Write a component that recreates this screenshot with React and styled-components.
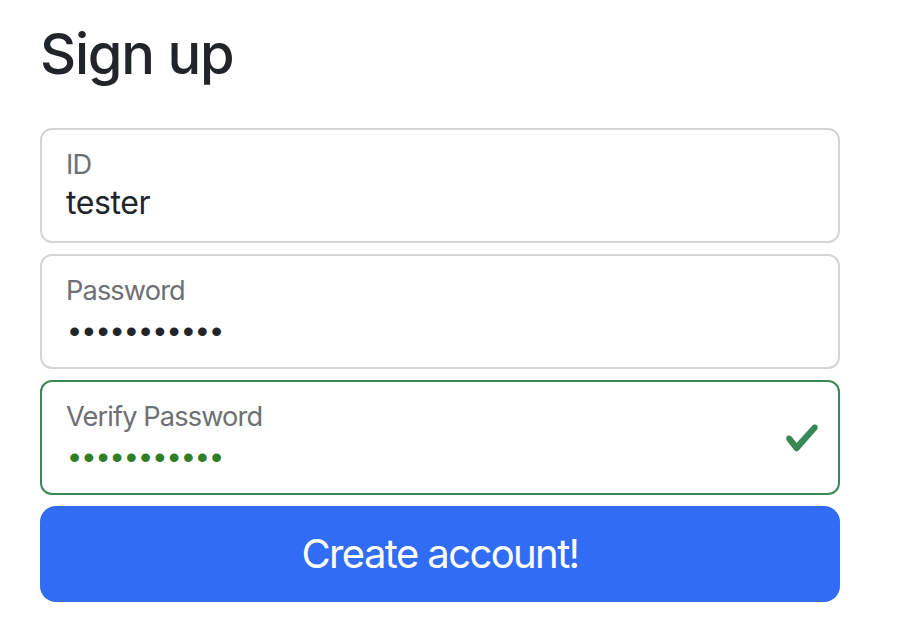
import React, { useState } from "react";
import styled, { createGlobalStyle } from "styled-components";

const GlobalStyle = createGlobalStyle`
    body {
        margin: 0;
        background: #ffffff;
        font-family: Inter, "Noto Sans", "Liberation Sans", sans-serif;
        color: #212529;
    }
`;

const Page = styled.div`
    width: 800px;
    padding: 21px 40px 0;
`;

const Title = styled.h1`
    margin: 0 0 40px;
    font-size: 56px;
    font-weight: 500;
    line-height: 1.2;
    letter-spacing: -0.022em;
    color: #212529;
`;

const Form = styled.form`
    display: flex;
    flex-direction: column;
    gap: 11px;
`;

const Field = styled.div`
    display: flex;
    align-items: flex-start;
    box-sizing: border-box;
    height: 115px;
    padding: 21px 18px 0 24px;
    border: 2px solid ${(p) => (p.$valid ? "#3d8858" : "#d3d6d9")};
    border-radius: 12px;
    background: #ffffff;
`;

const Stack = styled.div`
    display: flex;
    flex: 1;
    flex-direction: column;
`;

const Label = styled.label`
    font-size: 27.2px;
    line-height: 1;
    letter-spacing: -0.032em;
    color: #6e7073;
`;

const Input = styled.input`
    margin: 6px 0 0;
    padding: 0;
    border: 0;
    outline: none;
    background: transparent;
    font-family: inherit;
    font-size: 32px;
    line-height: 1.2;
    height: 38px;
    letter-spacing: -0.012em;
    color: #212529;

    &[type="password"] {
        padding: 2px 0 0 3px;
        font-family: "Liberation Sans", sans-serif;
        letter-spacing: 3px;
        color: ${(p) => p.$color || "#212529"};
    }
`;

const CheckIcon = styled.svg`
    align-self: center;
    width: 36px;
    height: 36px;
    margin-top: -20px;
`;

const Button = styled.button`
    height: 96px;
    border: 0;
    border-radius: 16px;
    background: #316cf4;
    color: #ffffff;
    font-family: inherit;
    font-size: 40px;
    line-height: 1.5;
    letter-spacing: -0.04em;
    cursor: pointer;
`;

function Check() {
    return (
        <CheckIcon viewBox="0 0 8 8">
            <path
                fill="#3a8756"
                d="M2.3 6.73.6 4.53c-.4-1.04.46-1.4 1.1-.8l1.1 1.4 3.4-3.8c.6-.63 1.6-.27 1.2.7l-4 4.6c-.43.5-.8.4-1.1.1z"
            />
        </CheckIcon>
    );
}

export default function App() {
    const [id, setId] = useState("tester");
    const [password, setPassword] = useState("abcdefghijk");
    const [verify, setVerify] = useState("abcdefghijk");

    return (
        <Page>
            <GlobalStyle />
            <Title>Sign up</Title>
            <Form onSubmit={(e) => e.preventDefault()}>
                <Field>
                    <Stack>
                        <Label htmlFor="id">ID</Label>
                        <Input id="id" value={id} onChange={(e) => setId(e.target.value)} />
                    </Stack>
                </Field>
                <Field>
                    <Stack>
                        <Label htmlFor="pw">Password</Label>
                        <Input
                            id="pw"
                            type="password"
                            value={password}
                            onChange={(e) => setPassword(e.target.value)}
                        />
                    </Stack>
                </Field>
                <Field $valid>
                    <Stack>
                        <Label htmlFor="pw2">Verify Password</Label>
                        <Input
                            id="pw2"
                            type="password"
                            $color="#307f28"
                            value={verify}
                            onChange={(e) => setVerify(e.target.value)}
                        />
                    </Stack>
                    <Check />
                </Field>
                <Button type="submit">Create account!</Button>
            </Form>
        </Page>
    );
}
